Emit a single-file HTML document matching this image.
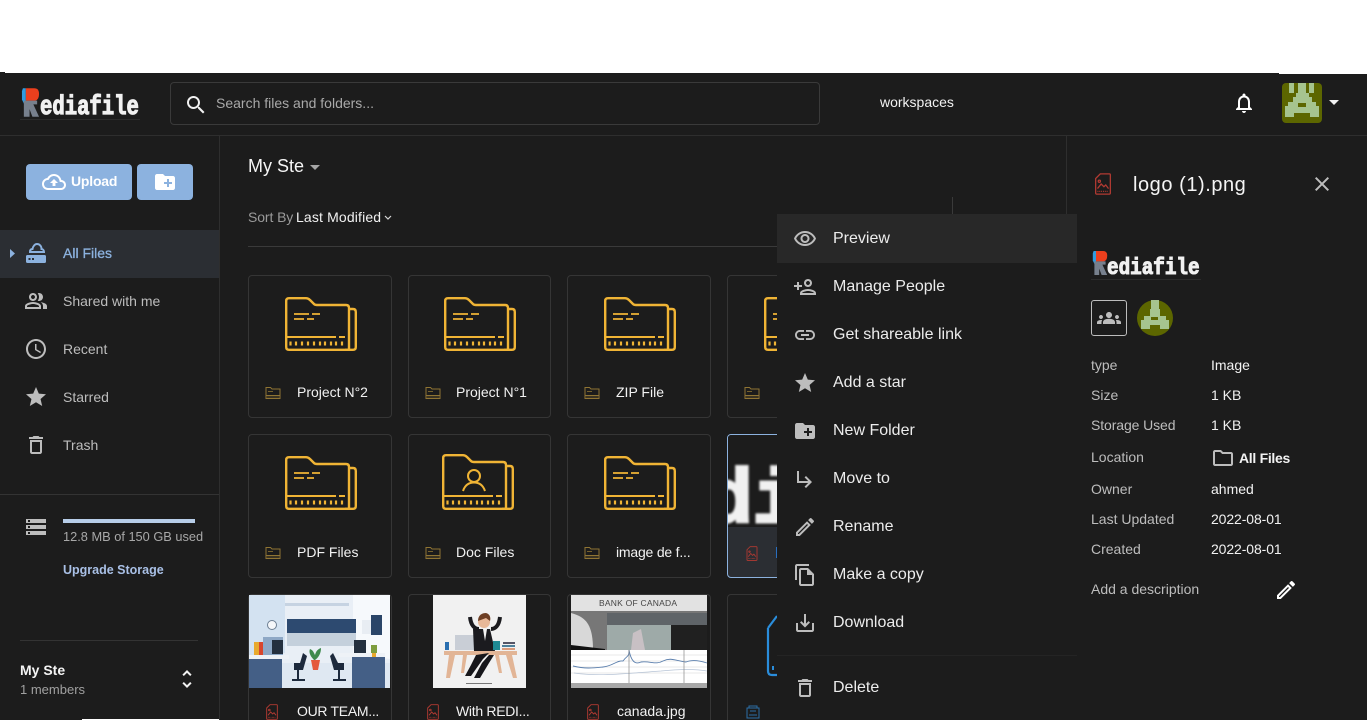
<!DOCTYPE html>
<html lang="en">
<head>
<meta charset="utf-8">
<title>Rediafile</title>
<style>
html,body{margin:0;padding:0;background:#fff;width:1367px;height:720px;overflow:hidden}
body{position:relative;font-family:"Liberation Sans",sans-serif;color:#fff}
#root{position:absolute;left:0;top:0;width:1367px;height:720px;overflow:hidden}
#app{position:absolute;left:0;top:73px;width:1367px;height:647px;background:#1c1c1c}
.a{position:absolute}
.t{position:absolute;white-space:nowrap;line-height:20px;font-size:14px}
.m{font-size:16px;color:#ececec;left:833px}
.g{color:#bdbdbd}
.w{color:#f2f2f2}
.b{font-weight:bold}
svg{position:absolute;overflow:visible;display:block}
.l{position:absolute;background:#333}
.card{position:absolute;box-sizing:border-box;border:1px solid #353535;border-radius:4px;background:#1c1c1c}
.logo{position:absolute;white-space:nowrap;font-family:"Liberation Mono",monospace;font-weight:bold;color:#f1f1f1;transform-origin:0 100%;-webkit-text-stroke:.9px #f1f1f1;line-height:20px}
</style>
</head>
<body>
<div id="root">
<svg width="0" height="0" style="position:absolute">
<defs>
<symbol id="folder" viewBox="0 0 72 54">
<g fill="none" stroke="#f0b435" stroke-width="2.400" stroke-linejoin="round">
<path d="M4 1.200H21Q23 1.200 25 3L29 7Q30 8 32 8H61Q64 8 64 11V52.800H4Q1.200 52.800 1.200 50V4Q1.200 1.200 4 1.200Z"/>
<path d="M64 12H68Q70.800 12 70.800 15V50Q70.800 52.800 68 52.800H60"/>
<path d="M1 40H51M54 40H60" stroke-width="2"/>
<path d="M9 17H24M27 17H35M9 22H19M22 22H29" stroke-width="1.800"/>
<path d="M5.500 44.500V48.500M11 44.500V48.500M17 44.500V48.500M23 44.500V48.500M29 44.500V48.500M35 44.500V48.500M40 44.500V48.500M46 44.500V48.500M51 44.500V48.500M57 44.500V48.500" stroke-width="2.200"/>
</g>
</symbol>
<symbol id="pfolder" viewBox="0 0 72 56">
<g fill="none" stroke="#f0b435" stroke-width="2.400" stroke-linejoin="round">
<path d="M4 1.200H21Q23 1.200 25 3L29 7Q30 8 32 8H61Q64 8 64 11V54.800H4Q1.200 54.800 1.200 52V4Q1.200 1.200 4 1.200Z"/>
<path d="M64 12H68Q70.800 12 70.800 15V52Q70.800 54.800 68 54.800H60"/>
<path d="M1 42H51M54 42H60" stroke-width="2"/>
<circle cx="32" cy="22" r="6" stroke-width="2"/>
<path d="M21 37C23 31 27 28.500 32 28.500S41 31 43 37" stroke-width="2"/>
<path d="M5.500 46.500V50.500M11 46.500V50.500M17 46.500V50.500M23 46.500V50.500M29 46.500V50.500M35 46.500V50.500M40 46.500V50.500M46 46.500V50.500M51 46.500V50.500M57 46.500V50.500" stroke-width="2.200"/>
</g>
</symbol>
<symbol id="sfolder" viewBox="0 0 16 12">
<g fill="none" stroke="#8f7433" stroke-width="1">
<path d="M1 .5H5.500L7 2H15V11.500H1ZM1 8.500H15"/>
<path d="M3 4.500H8" stroke-width=".8"/>
<path d="M2.500 10H14" stroke-width="1" stroke-dasharray="1 1"/>
</g>
</symbol>
<symbol id="imgf" viewBox="0 0 18 24">
<g fill="none" stroke="#b23a32" stroke-width="1.400">
<path d="M6 1H16Q17 1 17 2V22Q17 23 16 23H2Q1 23 1 22V6Z"/>
<path d="M3 17L7 12L10 15L12 13L15 17"/>
<circle cx="5" cy="9" r="1.200"/>
<path d="M3 20H15" stroke-dasharray="1 1"/>
</g>
</symbol>
<symbol id="rmark" viewBox="0 0 20 32">
<path d="M5 1H14Q19 1 19 7Q19 13 15 14H5Z" fill="#ec3f1d"/>
<path d="M2 1H5V19H4L1 13V4Z" fill="#2f9ce0"/>
<path d="M3 14H17V18H13L19 31H12L9 23V31H3Z" fill="#77808d"/>
</symbol>
</defs>
</svg>

<div id="app"></div>
<div class="a" style="left:0;top:72px;width:5px;height:1px;background:#1c1c1c"></div>
<div class="a" style="left:1279px;top:73px;width:88px;height:1px;background:#fff"></div>

<!-- header -->
<div class="l" style="left:0;top:135px;width:1367px;height:1px;background:#2e2e2e"></div>
<div class="logo" style="left:40px;top:102px;font-size:20.600px;transform:scale(1,1.300)">ediafile</div>
<svg style="left:21px;top:87px" width="19" height="31"><use href="#rmark" width="19" height="31"/></svg>
<div class="l" style="left:20px;top:119px;width:120px;height:1px;background:#2c2c2c"></div>

<div class="a" style="left:170px;top:82px;width:648px;height:41px;border:1px solid #3a3a3a;border-radius:4px"></div>
<svg style="left:184px;top:93px" width="24" height="24" viewBox="0 0 24 24"><path fill="#f2f2f2" d="M15.500 14h-.79l-.28-.27C15.410 12.590 16 11.110 16 9.500 16 5.910 13.090 3 9.500 3S3 5.910 3 9.500 5.910 16 9.500 16c1.610 0 3.090-.59 4.230-1.570l.27.28v.79l5 4.990L20.490 19l-4.990-5zm-6 0C7.010 14 5 11.990 5 9.500S7.010 5 9.500 5 14 7.010 14 9.500 11.990 14 9.500 14z"/></svg>
<div class="t" style="left:216px;top:93px;color:#a9a9a9">Search files and folders...</div>
<div class="t w" style="left:880px;top:92px">workspaces</div>
<svg style="left:1232px;top:91px" width="24" height="24" viewBox="0 0 24 24"><path fill="#fff" d="M12 22c1.100 0 2-.9 2-2h-4c0 1.100.9 2 2 2zm6-6v-5c0-3.070-1.630-5.640-4.500-6.320V4c0-.83-.67-1.500-1.500-1.500s-1.500.67-1.500 1.500v.68C7.640 5.360 6 7.920 6 11v5l-2 2v1h16v-1l-2-2zm-2 1H8v-6c0-2.480 1.510-4.500 4-4.500s4 2.020 4 4.500v6z"/></svg>
<svg style="left:1282px;top:83px" width="40" height="40" viewBox="0 0 40 40">
<rect width="40" height="40" rx="4" fill="#5c6600"/>
<g fill="#a6c48f"><rect x="7" y="0" width="5" height="10"/><rect x="16" y="0" width="8" height="10"/><rect x="27" y="0" width="5" height="10"/><rect x="14" y="10" width="13" height="4"/><rect x="11" y="14" width="19" height="5"/><rect x="6" y="19" width="28" height="4"/><rect x="3" y="23" width="34" height="11"/></g>
<rect x="16" y="20" width="8" height="4" fill="#5c6600"/><rect x="12" y="30" width="16" height="4" fill="#5c6600"/>
</svg>
<svg style="left:1329px;top:100px" width="11" height="6"><path d="M0 0H10L5 5Z" fill="#f2f2f2"/></svg>

<!-- sidebar -->
<div class="l" style="left:219px;top:136px;width:1px;height:584px;background:#2e2e2e"></div>
<div class="a" style="left:26px;top:164px;width:106px;height:36px;background:#8cb2df;border-radius:4px"></div>
<svg style="left:42px;top:170px" width="24" height="24" viewBox="0 0 24 24"><path fill="#fff" d="M19.350 10.040C18.670 6.590 15.640 4 12 4 9.110 4 6.600 5.640 5.350 8.040 2.340 8.360 0 10.910 0 14c0 3.310 2.690 6 6 6h13c2.760 0 5-2.240 5-5 0-2.640-2.050-4.780-4.650-4.960zM19 18H6c-2.210 0-4-1.790-4-4 0-2.050 1.530-3.760 3.560-3.970l1.070-.11.5-.95C8.080 7.140 9.940 6 12 6c2.620 0 4.880 1.860 5.390 4.430l.3 1.500 1.530.11c1.560.1 2.780 1.410 2.780 2.960 0 1.650-1.350 3-3 3zM8 13h2.550v3h2.900v-3H16l-4-4z"/></svg>
<div class="t b" style="left:71px;top:171px;color:#fff;letter-spacing:-.2px">Upload</div>
<div class="a" style="left:137px;top:164px;width:56px;height:36px;background:#8cb2df;border-radius:4px"></div>
<svg style="left:153px;top:170px" width="24" height="24" viewBox="0 0 24 24"><path fill="#fff" d="M20 6h-8l-2-2H4c-1.110 0-1.990.89-1.990 2L2 18c0 1.110.89 2 2 2h16c1.110 0 2-.89 2-2V8c0-1.110-.89-2-2-2zm-1 8h-3v3h-2v-3h-3v-2h3V9h2v3h3v2z"/></svg>

<div class="a" style="left:0;top:230px;width:219px;height:48px;background:#2b2e33"></div>
<svg style="left:10px;top:249px" width="5" height="9"><path d="M0 0L5 4.500L0 9Z" fill="#8cb2df"/></svg>
<svg style="left:24px;top:241px" width="24" height="24" viewBox="0 0 24 24"><path fill="none" stroke="#8cb2df" stroke-width="2" d="M6 11C6 8.500 7.500 8 8.500 8C9 5 11 3 13 3C15.500 3 17.500 5 17.500 8C19 8 20 9.500 20 11Z"/><rect x="2" y="14" width="20" height="8" rx="1.500" fill="#8cb2df"/><rect x="4.500" y="17" width="2" height="2" fill="#2b2e33"/><rect x="8" y="17" width="2" height="2" fill="#2b2e33"/></svg>
<div class="t b" style="left:63px;top:243px;color:#8cb2df;font-weight:normal;-webkit-text-stroke:.3px #8cb2df">All Files</div>

<svg style="left:24px;top:289px" width="24" height="24" viewBox="0 0 24 24"><path fill="#bdbdbd" d="M16.670 13.130C18.040 14.060 19 15.320 19 17v3h4v-3c0-2.180-3.570-3.470-6.330-3.870zM15 12c2.210 0 4-1.790 4-4s-1.790-4-4-4c-.47 0-.91.1-1.330.24C14.500 5.270 15 6.580 15 8s-.5 2.730-1.330 3.760c.42.14.86.24 1.330.24zM9 12c2.210 0 4-1.790 4-4s-1.790-4-4-4-4 1.790-4 4 1.790 4 4 4zm0-6c1.100 0 2 .9 2 2s-.9 2-2 2-2-.9-2-2 .9-2 2-2zM9 13c-2.670 0-8 1.340-8 4v3h16v-3c0-2.660-5.330-4-8-4zm6 5H3v-.99C3.200 16.290 6.300 15 9 15s5.800 1.290 6 2v1z"/></svg>
<div class="t g" style="left:63px;top:291px">Shared with me</div>
<svg style="left:24px;top:337px" width="24" height="24" viewBox="0 0 24 24"><path fill="#bdbdbd" d="M11.990 2C6.470 2 2 6.480 2 12s4.470 10 9.990 10C17.520 22 22 17.520 22 12S17.520 2 11.990 2zM12 20c-4.420 0-8-3.580-8-8s3.580-8 8-8 8 3.580 8 8-3.580 8-8 8zm.5-13H11v6l5.250 3.150.75-1.230-4.500-2.670z"/></svg>
<div class="t g" style="left:63px;top:339px">Recent</div>
<svg style="left:24px;top:385px" width="24" height="24" viewBox="0 0 24 24"><path fill="#bdbdbd" d="M12 17.270L18.180 21l-1.640-7.030L22 9.240l-7.190-.61L12 2 9.190 8.630 2 9.240l5.460 4.730L5.820 21z"/></svg>
<div class="t g" style="left:63px;top:387px">Starred</div>
<svg style="left:24px;top:433px" width="24" height="24" viewBox="0 0 24 24"><path fill="#bdbdbd" d="M6 19c0 1.100.9 2 2 2h8c1.100 0 2-.9 2-2V7H6v12zM8 9h8v10H8V9zm7.500-5l-1-1h-5l-1 1H5v2h14V4z"/></svg>
<div class="t g" style="left:63px;top:435px">Trash</div>

<div class="l" style="left:0;top:494px;width:219px;height:1px;background:#333"></div>
<svg style="left:24px;top:515px" width="24" height="24" viewBox="0 0 24 24"><path fill="#bdbdbd" d="M2 20h20v-4H2v4zm2-3h2v2H4v-2zM2 4v4h20V4H2zm4 3H4V5h2v2zm-4 7h20v-4H2v4zm2-3h2v2H4v-2z"/></svg>
<div class="a" style="left:63px;top:519px;width:132px;height:4px;background:#b7cde8"></div>
<div class="t" style="left:63px;top:527px;font-size:12.800px;color:#a8a8a8">12.8 MB of 150 GB used</div>
<div class="t b" style="left:63px;top:560px;font-size:12.500px;color:#a9c0e6">Upgrade Storage</div>
<div class="l" style="left:20px;top:640px;width:178px;height:1px;background:#333"></div>
<div class="t b" style="left:20px;top:660px;color:#f4f4f4">My Ste</div>
<div class="t" style="left:20px;top:680px;font-size:13px;color:#a0a0a0">1 members</div>
<svg style="left:175px;top:667px" width="24" height="24" viewBox="0 0 24 24"><path fill="#f2f2f2" d="M12 5.830L15.170 9l1.410-1.410L12 3 7.410 7.590 8.830 9 12 5.830zm0 12.340L8.830 15l-1.410 1.410L12 21l4.590-4.590L15.170 15 12 18.170z"/></svg>
<div class="a" style="left:82px;top:719px;width:137px;height:1px;background:#fff"></div>

<!-- main -->
<div class="t" style="left:248px;top:156px;font-size:18px;color:#f6f6f6">My Ste</div>
<svg style="left:310px;top:165px" width="10" height="5"><path d="M0 0H10L5 5Z" fill="#a6a6a6"/></svg>
<div class="t" style="left:248px;top:207px;color:#9a9a9a;letter-spacing:-.1px">Sort By</div>
<div class="t w" style="left:296px;top:207px;letter-spacing:.15px">Last Modified</div>
<svg style="left:384px;top:215px" width="8" height="5"><path d="M1 1L4 4L7 1" fill="none" stroke="#d8d8d8" stroke-width="1.200"/></svg>
<div class="l" style="left:248px;top:246px;width:530px;height:1px;background:#3a3a3a"></div>
<div class="l" style="left:952px;top:197px;width:1px;height:18px;background:#3a3a3a"></div>

<!-- row 1 -->
<div class="card" style="left:248px;top:275px;width:144px;height:143px"></div>
<svg style="left:285px;top:297px" width="72" height="54"><use href="#folder" width="72" height="54"/></svg>
<svg style="left:265px;top:387px" width="16" height="12"><use href="#sfolder" width="16" height="12"/></svg>
<div class="t w" style="left:297px;top:382px">Project N°2</div>

<div class="card" style="left:408px;top:275px;width:143px;height:143px"></div>
<svg style="left:444px;top:297px" width="72" height="54"><use href="#folder" width="72" height="54"/></svg>
<svg style="left:425px;top:387px" width="16" height="12"><use href="#sfolder" width="16" height="12"/></svg>
<div class="t w" style="left:456px;top:382px">Project N°1</div>

<div class="card" style="left:567px;top:275px;width:144px;height:143px"></div>
<svg style="left:604px;top:297px" width="72" height="54"><use href="#folder" width="72" height="54"/></svg>
<svg style="left:584px;top:387px" width="16" height="12"><use href="#sfolder" width="16" height="12"/></svg>
<div class="t w" style="left:616px;top:382px">ZIP File</div>

<div class="card" style="left:727px;top:275px;width:144px;height:143px"></div>
<svg style="left:764px;top:297px" width="72" height="54"><use href="#folder" width="72" height="54"/></svg>
<svg style="left:744px;top:387px" width="16" height="12"><use href="#sfolder" width="16" height="12"/></svg>

<!-- row 2 -->
<div class="card" style="left:248px;top:434px;width:144px;height:144px"></div>
<svg style="left:285px;top:456px" width="72" height="54"><use href="#folder" width="72" height="54"/></svg>
<svg style="left:265px;top:547px" width="16" height="12"><use href="#sfolder" width="16" height="12"/></svg>
<div class="t w" style="left:297px;top:542px">PDF Files</div>

<div class="card" style="left:408px;top:434px;width:143px;height:144px"></div>
<svg style="left:442px;top:454px" width="72" height="56"><use href="#pfolder" width="72" height="56"/></svg>
<svg style="left:425px;top:547px" width="16" height="12"><use href="#sfolder" width="16" height="12"/></svg>
<div class="t w" style="left:456px;top:542px">Doc Files</div>

<div class="card" style="left:567px;top:434px;width:144px;height:144px"></div>
<svg style="left:604px;top:456px" width="72" height="54"><use href="#folder" width="72" height="54"/></svg>
<svg style="left:584px;top:547px" width="16" height="12"><use href="#sfolder" width="16" height="12"/></svg>
<div class="t w" style="left:616px;top:542px;letter-spacing:-.2px">image de f...</div>

<div class="card" style="left:727px;top:434px;width:144px;height:144px;border-color:#8cb2df;background:#2b2e33;overflow:hidden">
<div class="a" style="left:0;top:0;width:142px;height:92px;background:#1c1c1c;overflow:hidden">
<div class="a" style="left:-21px;top:37px;font:bold 76px/60px 'Liberation Mono',monospace;color:#f1f1f1;-webkit-text-stroke:3px #f1f1f1;white-space:nowrap;filter:blur(1px)">di</div>
</div>
</div>
<svg style="left:746px;top:546px" width="12" height="15"><use href="#imgf" width="12" height="15"/></svg>
<div class="a" style="left:776px;top:547px;width:2px;height:11px;background:#2a6fc0"></div>

<!-- row 3 -->
<div class="card" style="left:248px;top:594px;width:144px;height:140px"></div>
<svg style="left:249px;top:595px" width="141" height="93" viewBox="0 0 141 93">
<rect width="141" height="93" fill="#e9eff6"/>
<path d="M0 0H36V58L0 64Z" fill="#d3e2f1"/>
<path d="M104 0H141V64L104 58Z" fill="#f6f9fc"/>
<path d="M0 68H141V93H0Z" fill="#dfe8f2"/>
<rect x="36" y="8" width="64" height="3" fill="#c6d3e2"/>
<rect x="38" y="24" width="69" height="14" fill="#2d4a70"/>
<rect x="38" y="38" width="69" height="13" fill="#c4d0dc"/>
<rect x="122" y="20" width="11" height="20" fill="#2a4568"/>
<rect x="113" y="25" width="9" height="14" fill="#e8edf3"/>
<circle cx="23" cy="30" r="4.500" fill="#f5f7fa" stroke="#6d7f93"/>
<rect x="5" y="47" width="5" height="16" fill="#e8a92e"/><rect x="10" y="47" width="4" height="16" fill="#d8462e"/>
<rect x="14" y="42" width="20" height="19" fill="#8ea8c6"/><rect x="23" y="45" width="11" height="14" fill="#24303f"/>
<rect x="0" y="63" width="33" height="30" fill="#445f86"/><rect x="0" y="60" width="40" height="4" fill="#eef2f7"/>
<rect x="103" y="62" width="33" height="31" fill="#445f86"/><rect x="90" y="58" width="46" height="4" fill="#eef2f7"/>
<rect x="105" y="45" width="12" height="13" fill="#24303f"/>
<path d="M54 58L58 61L54 75H45V68H51Z" fill="#1d2a3d"/><rect x="48" y="75" width="2" height="10" fill="#1d2a3d"/><rect x="43" y="84" width="13" height="2" fill="#1d2a3d"/>
<path d="M84 58L81 61L85 75H95V68H89Z" fill="#1d2a3d"/><rect x="89" y="75" width="2" height="10" fill="#1d2a3d"/><rect x="84" y="84" width="13" height="2" fill="#1d2a3d"/>
<path d="M65 65C60 60 60 56 61 54C64 55 65 58 66 60C67 56 69 54 72 53C72 58 70 62 66 65Z" fill="#3f8a4e"/>
<path d="M62 65H71L69 75H64Z" fill="#e4593c"/>
<rect x="122" y="50" width="6" height="8" fill="#7d9d3e"/><rect x="123" y="58" width="4" height="4" fill="#e8a92e"/>
</svg>
<div class="t w" style="left:297px;top:701px;letter-spacing:-.3px">OUR TEAM...</div>
<svg style="left:266px;top:704px" width="12" height="16"><use href="#imgf" width="12" height="16"/></svg>

<div class="card" style="left:408px;top:594px;width:143px;height:140px"></div>
<svg style="left:433px;top:595px" width="93" height="93" viewBox="0 0 93 93">
<rect width="93" height="93" fill="#f1f1f1"/>
<rect x="11" y="56" width="73" height="4" fill="#e2b596"/>
<path d="M16 60H22L17 83H13ZM73 60H79L84 83H80ZM30 60H34L31 78H28ZM62 60H66L69 78H66Z" fill="#e2b596"/>
<path d="M22 40H43L45 55H22Z" fill="#c9ced6"/>
<path d="M40 34L57 34L62 56H41Z" fill="#1b1b1f"/>
<path d="M37 22C38 31 42 34 46 34M67 22C66 31 62 34 58 34" fill="none" stroke="#1b1b1f" stroke-width="4"/>
<circle cx="51" cy="27" r="6" fill="#e8b898"/><path d="M45 26C45 20 49 18 53 18C57 19 58 23 57 26L53 23Z" fill="#6e3f25"/>
<path d="M50 34L54 34L52 46Z" fill="#f4f4f4"/>
<path d="M43 60L56 58L50 64L38 81H32L38 70ZM56 60L61 60L56 68L47 83H41L49 68Z" fill="#17171b"/>
<rect x="60" y="46" width="7" height="9" fill="#1f8a94"/>
<rect x="69" y="50" width="13" height="2" fill="#4d7f9a"/><rect x="69" y="53" width="13" height="2" fill="#d99a7a"/><rect x="70" y="47" width="12" height="2" fill="#556"/>
<rect x="12" y="47" width="4" height="8" fill="#2a6fb0"/>
<rect x="33" y="88" width="26" height="1" fill="#777"/>
</svg>
<svg style="left:427px;top:704px" width="12" height="16"><use href="#imgf" width="12" height="16"/></svg>
<div class="t w" style="left:456px;top:701px;letter-spacing:-.3px">With REDI...</div>

<div class="card" style="left:567px;top:594px;width:144px;height:140px"></div>
<svg style="left:571px;top:595px" width="136" height="93" viewBox="0 0 136 93">
<rect width="136" height="93" fill="#8f8f8f"/>
<rect width="136" height="16" fill="#e2e2e2"/>
<text x="67" y="11" font-family="Liberation Sans,sans-serif" font-size="8.500" fill="#444" text-anchor="middle" textLength="78">BANK OF CANADA</text>
<path d="M0 16H136V55H0Z" fill="#777"/>
<path d="M0 18C14 22 22 28 22 55H0Z" fill="#d8d8d8"/>
<rect x="36" y="30" width="70" height="25" fill="#9eaaa8"/><rect x="100" y="30" width="36" height="25" fill="#202020"/>
<rect x="36" y="18" width="100" height="12" fill="#5f6468"/>
<path d="M60 55L62 38L70 34L74 55Z" fill="#c8c0c4"/><path d="M0 50L34 54L34 56H0Z" fill="#111"/>
<rect x="0" y="55" width="136" height="33" fill="#fff"/>
<g stroke="#d5d5d5" stroke-width=".6"><path d="M0 60H136M0 66H136M0 72H136M0 78H136"/></g>
<path d="M2 71C15 74 22 73 32 72C42 71 46 65 52 66C56 60 58 63 58 55C60 66 64 70 70 67C80 66 85 70 92 66C100 62 105 66 115 67C122 64 130 66 136 68" fill="none" stroke="#5b7fad" stroke-width=".9"/>
<path d="M3 78C30 82 60 78 90 76C110 74 125 74 136 76" fill="none" stroke="#b7c4d6" stroke-width=".7"/>
<path d="M58 55V88M113 55V88" stroke="#888" stroke-width=".7"/>
<rect y="88" width="136" height="5" fill="#a8a8a8"/>
</svg>
<svg style="left:587px;top:704px" width="12" height="16"><use href="#imgf" width="12" height="16"/></svg>
<div class="t w" style="left:617px;top:701px">canada.jpg</div>

<div class="card" style="left:727px;top:594px;width:144px;height:140px"></div>
<svg style="left:767px;top:614px" width="20" height="62" fill="none"><path d="M1 14L10 2M1 14V57Q1 61 5 61H14" stroke="#2a8ddb" stroke-width="2.200"/><path d="M6 52V56" stroke="#2a8ddb" stroke-width="2"/></svg>
<svg style="left:746px;top:705px" width="14" height="15" viewBox="0 0 14 15" fill="none" stroke="#2b6ea6"><path d="M3 3V1H11V3M1 3H13V13H1ZM3 10H11M4 6H10"/></svg>

<!-- context menu -->
<div class="a" style="left:777px;top:214px;width:300px;height:506px;background:#1c1c1c"></div>
<div class="a" style="left:777px;top:214px;width:300px;height:49px;background:#282828"></div>
<svg style="left:793px;top:227px" width="24" height="24" viewBox="0 0 24 24"><path fill="#bdbdbd" d="M12 6c3.790 0 7.170 2.130 8.820 5.500C19.170 14.870 15.790 17 12 17s-7.170-2.130-8.820-5.500C4.830 8.130 8.210 6 12 6m0-2C7 4 2.730 7.110 1 11.500 2.730 15.890 7 19 12 19s9.270-3.110 11-7.500C21.270 7.110 17 4 12 4zm0 5c1.380 0 2.500 1.120 2.500 2.500S13.380 14 12 14s-2.500-1.120-2.500-2.500S10.620 9 12 9m0-2c-2.480 0-4.500 2.020-4.500 4.500S9.520 16 12 16s4.500-2.020 4.500-4.500S14.480 7 12 7z"/></svg>
<div class="t m" style="top:229px">Preview</div>
<svg style="left:793px;top:275px" width="24" height="24" viewBox="0 0 24 24"><path fill="#bdbdbd" d="M15 6c1.100 0 2 .9 2 2s-.9 2-2 2-2-.9-2-2 .9-2 2-2m0 10c2.700 0 5.800 1.290 6 2H9c.23-.72 3.310-2 6-2M15 4c-2.210 0-4 1.790-4 4s1.790 4 4 4 4-1.790 4-4-1.790-4-4-4zm0 10c-2.670 0-8 1.340-8 4v2h16v-2c0-2.660-5.330-4-8-4zM6 10V7H4v3H1v2h3v3h2v-3h3v-2H6z"/></svg>
<div class="t m" style="top:277px">Manage People</div>
<svg style="left:793px;top:323px" width="24" height="24" viewBox="0 0 24 24"><path fill="#bdbdbd" d="M3.900 12c0-1.710 1.390-3.100 3.100-3.100h4V7H7c-2.760 0-5 2.240-5 5s2.240 5 5 5h4v-1.900H7c-1.710 0-3.100-1.390-3.100-3.100zM8 13h8v-2H8v2zm9-6h-4v1.900h4c1.710 0 3.100 1.390 3.100 3.100s-1.390 3.100-3.100 3.100h-4V17h4c2.760 0 5-2.240 5-5s-2.240-5-5-5z"/></svg>
<div class="t m" style="top:325px">Get shareable link</div>
<svg style="left:793px;top:371px" width="24" height="24" viewBox="0 0 24 24"><path fill="#bdbdbd" d="M12 17.270L18.180 21l-1.640-7.030L22 9.240l-7.190-.61L12 2 9.190 8.630 2 9.240l5.460 4.730L5.820 21z"/></svg>
<div class="t m" style="top:373px">Add a star</div>
<svg style="left:793px;top:419px" width="24" height="24" viewBox="0 0 24 24"><path fill="#bdbdbd" d="M20 6h-8l-2-2H4c-1.110 0-1.990.89-1.990 2L2 18c0 1.110.89 2 2 2h16c1.110 0 2-.89 2-2V8c0-1.110-.89-2-2-2zm-1 8h-3v3h-2v-3h-3v-2h3V9h2v3h3v2z"/></svg>
<div class="t m" style="top:421px">New Folder</div>
<svg style="left:793px;top:467px" width="24" height="24" viewBox="0 0 24 24"><path fill="#bdbdbd" d="M19 15l-6 6-1.420-1.420L15.170 16H4V4h2v10h9.170l-3.590-3.580L13 9l6 6z"/></svg>
<div class="t m" style="top:469px">Move to</div>
<svg style="left:793px;top:515px" width="24" height="24" viewBox="0 0 24 24"><path fill="#bdbdbd" d="M14.060 9.020l.92.92L5.920 19H5v-.92l9.060-9.060M17.660 3c-.25 0-.51.1-.7.29l-1.830 1.830 3.750 3.750 1.830-1.830c.39-.39.39-1.020 0-1.410l-2.340-2.340c-.2-.2-.45-.29-.71-.29zm-3.600 3.190L3 17.250V21h3.750L17.810 9.940l-3.750-3.750z"/></svg>
<div class="t m" style="top:517px">Rename</div>
<svg style="left:793px;top:563px" width="24" height="24" viewBox="0 0 24 24"><path fill="#bdbdbd" d="M16 1H4c-1.100 0-2 .9-2 2v14h2V3h12V1zm-1 4H8c-1.100 0-1.990.9-1.990 2L6 21c0 1.100.89 2 1.990 2H19c1.100 0 2-.9 2-2V11l-6-6zM8 21V7h6v5h5v9H8z"/></svg>
<div class="t m" style="top:565px">Make a copy</div>
<svg style="left:793px;top:611px" width="24" height="24" viewBox="0 0 24 24"><path fill="#bdbdbd" d="M19 12v7H5v-7H3v7c0 1.100.9 2 2 2h14c1.100 0 2-.9 2-2v-7h-2zm-6 .67l2.590-2.580L17 11.500l-5 5-5-5 1.410-1.410L11 12.670V3h2z"/></svg>
<div class="t m" style="top:613px">Download</div>
<div class="l" style="left:777px;top:655px;width:300px;height:1px;background:#242424"></div>
<svg style="left:793px;top:676px" width="24" height="24" viewBox="0 0 24 24"><path fill="#bdbdbd" d="M6 19c0 1.100.9 2 2 2h8c1.100 0 2-.9 2-2V7H6v12zM8 9h8v10H8V9zm7.500-5l-1-1h-5l-1 1H5v2h14V4z"/></svg>
<div class="t m" style="top:678px">Delete</div>

<!-- right panel -->
<div class="l" style="left:1066px;top:136px;width:1px;height:78px;background:#2e2e2e"></div>
<svg style="left:1094px;top:173px" width="18" height="22"><use href="#imgf" width="18" height="22"/></svg>
<div class="t" style="left:1133px;top:175px;font-size:20px;color:#f4f4f4;letter-spacing:.55px">logo (1).png</div>
<svg style="left:1310px;top:172px" width="24" height="24" viewBox="0 0 24 24"><path fill="#bdbdbd" d="M19 6.410L17.590 5 12 10.590 6.410 5 5 6.410 10.590 12 5 17.590 6.410 19 12 13.410 17.590 19 19 17.590 13.410 12z"/></svg>
<div class="logo" style="left:1107px;top:260px;font-size:19.300px;transform:scale(1,1.200)">ediafile</div>
<svg style="left:1092px;top:249px" width="16" height="28"><use href="#rmark" width="16" height="28"/></svg>
<div class="l" style="left:1091px;top:279px;width:110px;height:1px;background:#2c2c2c"></div>
<div class="a" style="left:1091px;top:300px;width:34px;height:34px;border:1px solid #bdbdbd;border-radius:3px"></div>
<svg style="left:1097px;top:306px" width="24" height="24" viewBox="0 0 24 24"><path fill="#bdbdbd" d="M12 12.750c1.630 0 3.070.39 4.240.9 1.080.48 1.760 1.560 1.760 2.730V18H6v-1.610c0-1.180.68-2.260 1.760-2.730 1.170-.52 2.610-.91 4.240-.91zM4 13c1.100 0 2-.9 2-2s-.9-2-2-2-2 .9-2 2 .9 2 2 2zm1.130 1.100c-.37-.06-.74-.1-1.130-.1-.99 0-1.930.21-2.780.58C.48 14.900 0 15.620 0 16.430V18h4.500v-1.610c0-.83.23-1.610.63-2.290zM20 13c1.100 0 2-.9 2-2s-.9-2-2-2-2 .9-2 2 .9 2 2 2zm4 3.430c0-.81-.48-1.530-1.220-1.850-.85-.37-1.790-.58-2.780-.58-.39 0-.76.04-1.130.1.4.68.63 1.460.63 2.290V18H24v-1.570zM12 6c1.660 0 3 1.340 3 3s-1.340 3-3 3-3-1.340-3-3 1.340-3 3-3z"/></svg>
<svg style="left:1137px;top:300px" width="36" height="36" viewBox="0 0 36 36">
<circle cx="18" cy="18" r="18" fill="#5c6600"/>
<g fill="#a6c48f"><rect x="14" y="0" width="8" height="9"/><rect x="13" y="9" width="10" height="7"/><rect x="7" y="16" width="22" height="4"/><rect x="4" y="20" width="28" height="9"/></g>
<rect x="14" y="17" width="7" height="3" fill="#5c6600"/><rect x="13" y="25" width="10" height="4" fill="#5c6600"/>
</svg>

<div class="t g" style="left:1091px;top:355px">type</div><div class="t w" style="left:1211px;top:355px">Image</div>
<div class="t g" style="left:1091px;top:385px">Size</div><div class="t w" style="left:1211px;top:385px">1 KB</div>
<div class="t g" style="left:1091px;top:415px;letter-spacing:-.1px">Storage Used</div><div class="t w" style="left:1211px;top:415px">1 KB</div>
<div class="t g" style="left:1091px;top:447px">Location</div>
<svg style="left:1211px;top:446px" width="24" height="24" viewBox="0 0 24 24"><path fill="#bdbdbd" d="M9.170 6l2 2H20v10H4V6h5.170M10 4H4c-1.100 0-1.990.9-1.990 2L2 18c0 1.100.9 2 2 2h16c1.100 0 2-.9 2-2V8c0-1.100-.9-2-2-2h-8l-2-2z"/></svg>
<div class="t b" style="left:1239px;top:448px;color:#f2f2f2;letter-spacing:-.3px">All Files</div>
<div class="t g" style="left:1091px;top:479px">Owner</div><div class="t w" style="left:1211px;top:479px">ahmed</div>
<div class="t g" style="left:1091px;top:509px">Last Updated</div><div class="t w" style="left:1211px;top:509px;letter-spacing:-.1px">2022-08-01</div>
<div class="t g" style="left:1091px;top:539px">Created</div><div class="t w" style="left:1211px;top:539px;letter-spacing:-.1px">2022-08-01</div>
<div class="t g" style="left:1091px;top:579px">Add a description</div>
<svg style="left:1274px;top:578px" width="24" height="24" viewBox="0 0 24 24"><path fill="#fff" d="M14.060 9.020l.92.92L5.920 19H5v-.92l9.060-9.060M17.660 3c-.25 0-.51.1-.7.29l-1.830 1.830 3.750 3.750 1.830-1.830c.39-.39.39-1.020 0-1.410l-2.340-2.340c-.2-.2-.45-.29-.71-.29zm-3.600 3.190L3 17.250V21h3.750L17.810 9.940l-3.750-3.750z"/></svg>
</div>
</body>
</html>
